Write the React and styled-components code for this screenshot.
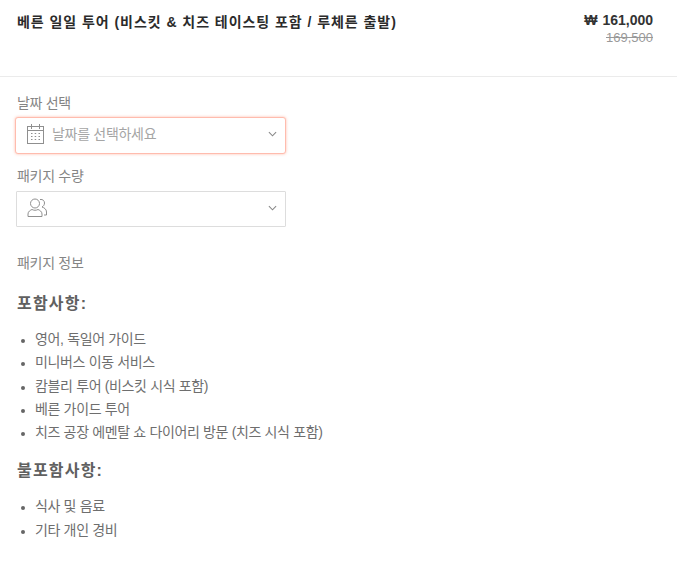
import React from "react";
import styled, { createGlobalStyle } from "styled-components";

const GlobalStyle = createGlobalStyle`
  html, body {
    margin: 0;
    padding: 0;
    background: #fff;
    font-family: "Liberation Sans", "Noto Sans CJK KR", sans-serif;
  }
`;

const Page = styled.div`
  width: 677px;
  height: 567px;
  overflow: hidden;
  color: #666;
`;

const Header = styled.header`
  display: flex;
  justify-content: space-between;
  align-items: flex-start;
  height: 77px;
  box-sizing: border-box;
  padding: 11px 24px 0 17px;
  border-bottom: 1px solid #ebebeb;
`;

const Title = styled.h1`
  margin: 0;
  font-size: 14px;
  line-height: 22px;
  font-weight: 700;
  letter-spacing: 0.95px;
  color: #2b2b2b;
`;

const Prices = styled.div`
  text-align: right;
`;

const Price = styled.div`
  font-size: 14px;
  line-height: 18px;
  font-weight: 700;
  color: #333;
`;

const Won = styled.span`
  display: inline-block;
  margin-right: 5px;
`;

const OldPrice = styled.div`
  margin-top: 1px;
  font-size: 13px;
  line-height: 16px;
  color: #999;
  text-decoration: line-through;
`;

const Body = styled.main`
  padding: 16px 17px 0;
`;

const Label = styled.div`
  font-size: 14px;
  line-height: 20px;
  letter-spacing: -0.3px;
  color: #858585;
`;

const Select = styled.div`
  display: flex;
  align-items: center;
  box-sizing: border-box;
  width: ${(p) => (p.$active ? "271px" : "270px")};
  height: ${(p) => (p.$active ? "37px" : "36px")};
  margin: ${(p) => (p.$active ? "4px 0 12px -2px" : "5px 0 0 -1px")};
  padding: 0 8px 0 10px;
  background: #fff;
  border: 1px solid ${(p) => (p.$active ? "#ffbcae" : "#ddd")};
  border-radius: ${(p) => (p.$active ? "3px" : "1px")};
  box-shadow: ${(p) => (p.$active ? "0 0 3px rgba(255, 160, 135, 0.7)" : "none")};
`;

const SelectIcon = styled.svg`
  flex: none;
  width: 20px;
  height: 22px;
  margin: 0 6px 3px 0;
  fill: none;
  stroke: #8f8f8f;
  stroke-width: 1;
`;

const Placeholder = styled.span`
  flex: 1;
  padding-bottom: 5px;
  font-size: 14px;
  letter-spacing: -0.3px;
  color: #a5a5a5;
`;

const Chevron = styled.svg`
  flex: none;
  width: 9px;
  height: 6px;
  margin: 0 0 3px 0;
  fill: none;
  stroke: #888;
  stroke-width: 1.2;
`;

const InfoLabel = styled(Label)`
  margin-top: 26px;
`;

const SectionTitle = styled.h2`
  margin: ${(p) => (p.$first ? "21px" : "17px")} 0 14px;
  font-size: 16px;
  line-height: 20px;
  font-weight: 700;
  letter-spacing: 1.2px;
  color: #606060;
`;

const List = styled.ul`
  margin: 0;
  padding: 0 0 0 18px;
  font-size: 14px;
  line-height: 23.3px;
  letter-spacing: -0.35px;
  color: #6e6e6e;

  li::marker {
    color: #666;
    font-size: 12px;
  }
`;

const CalendarIcon = () => (
  <SelectIcon viewBox="0 0 20 22">
    <rect x="1.5" y="3.5" width="16" height="17" />
    <path d="M1.500 7.500h16M5.500 1v5M13.500 1v5" />
    <path d="M5 10.500h1.500M8.700 10.500h1.500M12.500 10.500h1.500M5 13.500h1.500M8.700 13.500h1.500M12.500 13.500h1.500M5 16.500h1.500M8.700 16.500h1.500M12.500 16.500h1.500" />
  </SelectIcon>
);

const UsersIcon = () => (
  <SelectIcon viewBox="0 0 20 22">
    <circle cx="8" cy="6.500" r="4.500" />
    <path d="M1 19.500v-2.500c0-2.500 2.500-4 4-4.500 2 1 4 1 6 0 1.500.5 4 2 4 4.500v2.500z" />
    <path d="M13 2.500c3-.5 4.500 1.500 4.500 3.500 0 1.800-1 3.200-2.500 4 2 .7 4.500 2 4.500 5v3h-2.500" />
  </SelectIcon>
);

const ChevronIcon = () => (
  <Chevron viewBox="0 0 10 6">
    <path d="M1 1l4 4 4-4" />
  </Chevron>
);

const included = [
  "영어, 독일어 가이드",
  "미니버스 이동 서비스",
  "캄블리 투어 (비스킷 시식 포함)",
  "베른 가이드 투어",
  "치즈 공장 에멘탈 쇼 다이어리 방문 (치즈 시식 포함)",
];

const excluded = ["식사 및 음료", "기타 개인 경비"];

export default function App() {
  return (
    <Page>
      <GlobalStyle />
      <Header>
        <Title>베른 일일 투어 (비스킷 &amp; 치즈 테이스팅 포함 / 루체른 출발)</Title>
        <Prices>
          <Price>
            <Won>₩</Won>161,000
          </Price>
          <OldPrice>169,500</OldPrice>
        </Prices>
      </Header>
      <Body>
        <Label>날짜 선택</Label>
        <Select $active>
          <CalendarIcon />
          <Placeholder>날짜를 선택하세요</Placeholder>
          <ChevronIcon />
        </Select>
        <Label>패키지 수량</Label>
        <Select>
          <UsersIcon />
          <Placeholder />
          <ChevronIcon />
        </Select>
        <InfoLabel>패키지 정보</InfoLabel>
        <SectionTitle $first>포함사항:</SectionTitle>
        <List>
          {included.map((item) => (
            <li key={item}>{item}</li>
          ))}
        </List>
        <SectionTitle>불포함사항:</SectionTitle>
        <List>
          {excluded.map((item) => (
            <li key={item}>{item}</li>
          ))}
        </List>
      </Body>
    </Page>
  );
}
